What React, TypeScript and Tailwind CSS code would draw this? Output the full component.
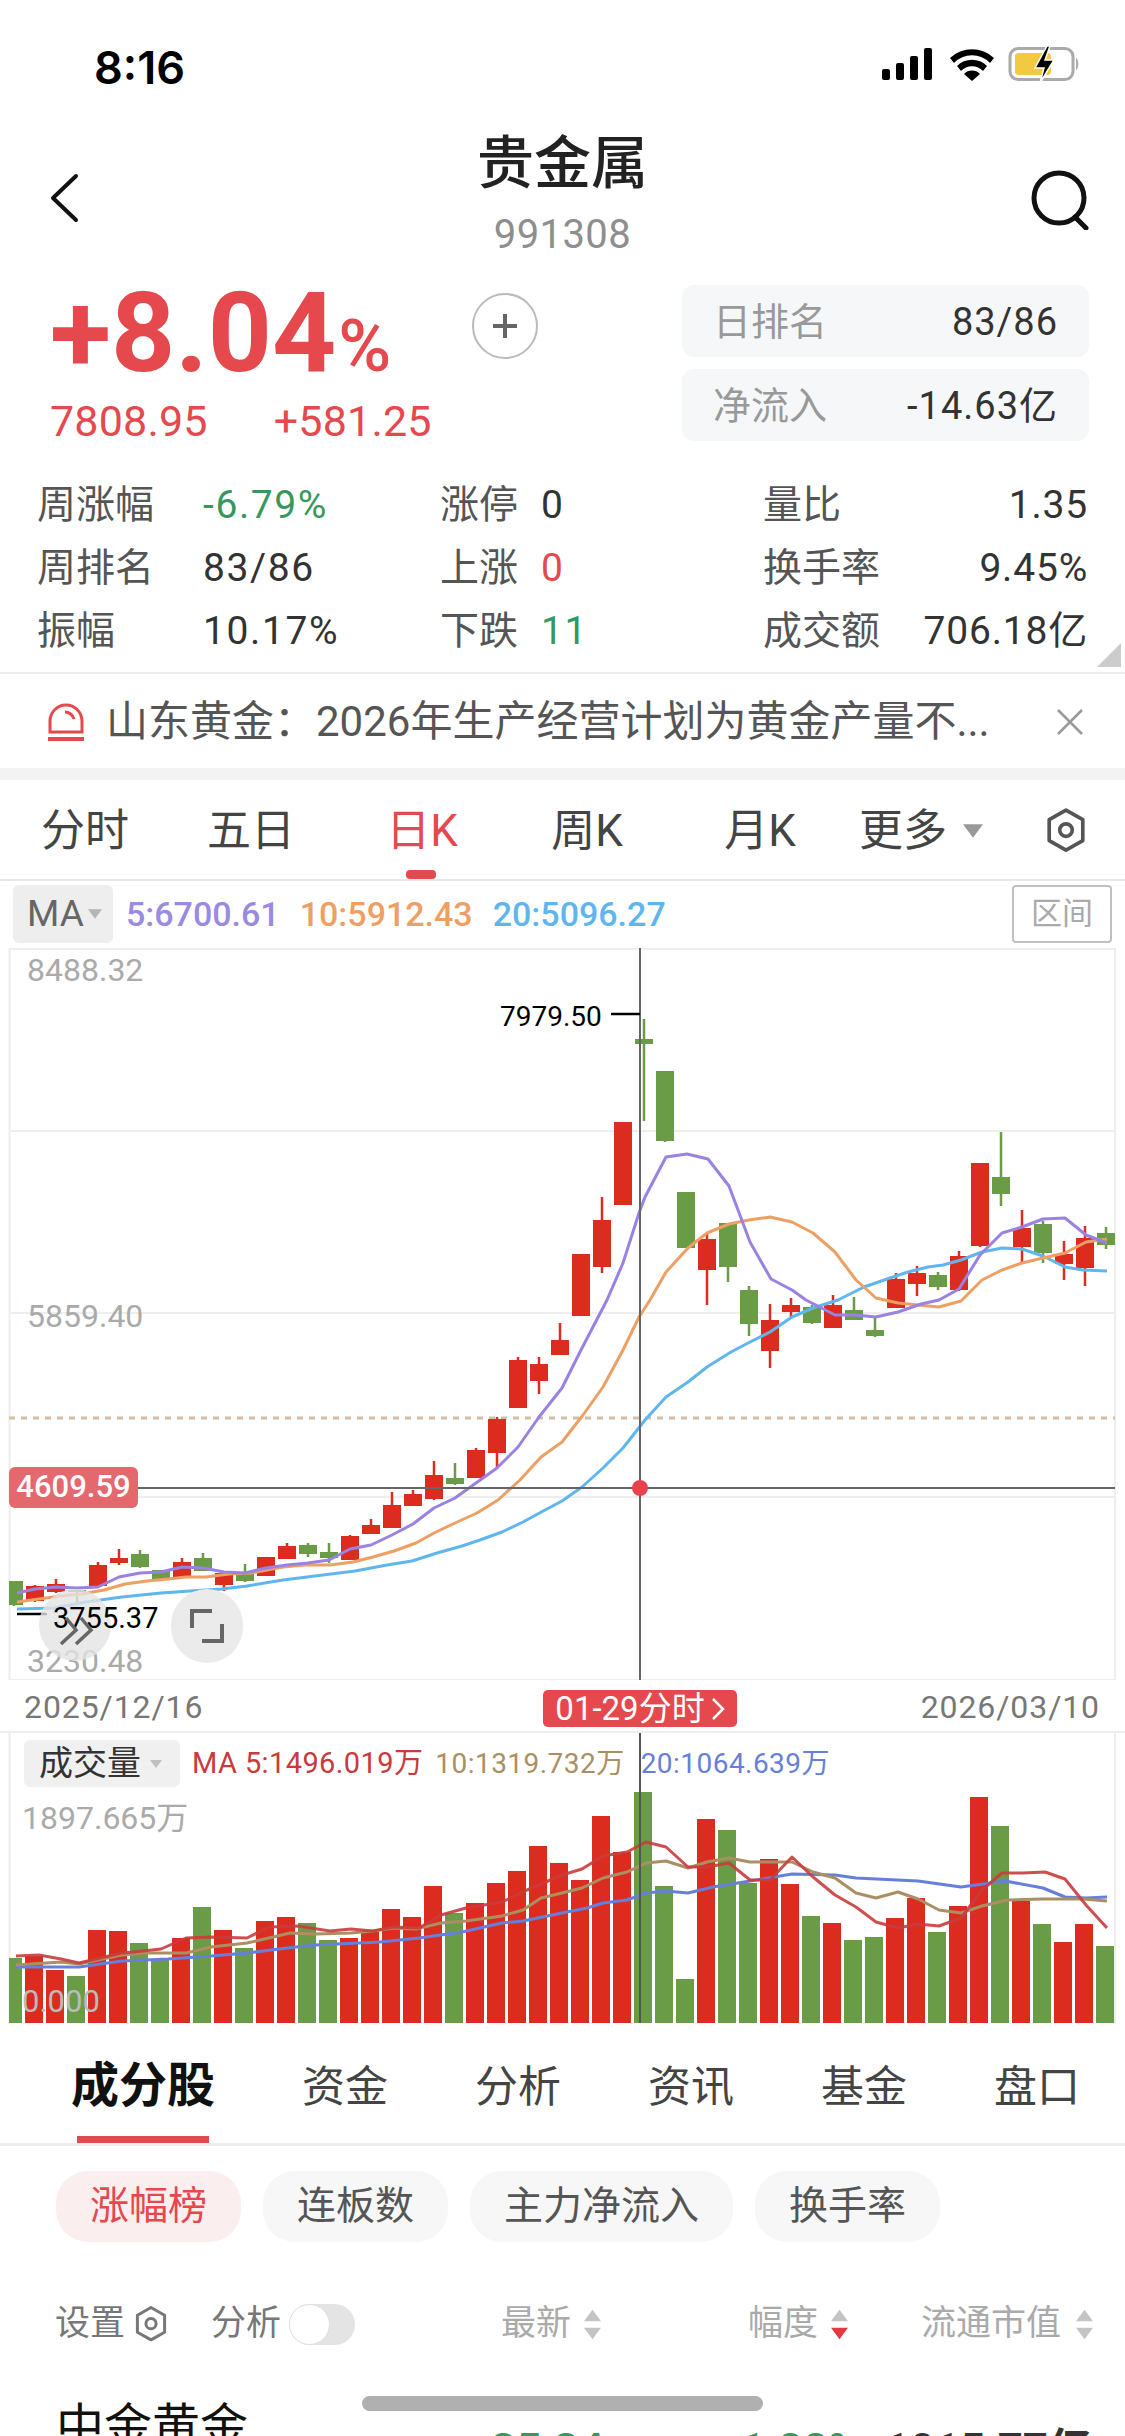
import React from "react";

const RED = "#db2c1f";
const GREEN = "#6a9c48";

// Candles: [rising, bodyTop, bodyBottom, wickTop, wickBottom]
const candles: [boolean, number, number, number, number][] = [
  [false, 1581, 1605, 1581, 1606],
  [true, 1586, 1601, 1585, 1602],
  [true, 1584, 1592, 1579, 1593],
  [false, 1590, 1592, 1590, 1602],
  [true, 1565, 1586, 1562, 1587],
  [true, 1558, 1563, 1549, 1565],
  [false, 1554, 1567, 1550, 1568],
  [false, 1570, 1580, 1570, 1581],
  [true, 1562, 1577, 1558, 1577],
  [false, 1558, 1571, 1553, 1571],
  [true, 1573, 1585, 1572, 1591],
  [false, 1574, 1581, 1564, 1582],
  [true, 1557, 1576, 1557, 1576],
  [true, 1546, 1559, 1543, 1559],
  [false, 1545, 1554, 1543, 1557],
  [false, 1552, 1558, 1543, 1563],
  [true, 1536, 1560, 1535, 1560],
  [true, 1525, 1534, 1519, 1534],
  [true, 1505, 1528, 1492, 1528],
  [true, 1494, 1506, 1490, 1506],
  [true, 1475, 1499, 1461, 1500],
  [false, 1478, 1484, 1463, 1485],
  [true, 1450, 1478, 1448, 1478],
  [true, 1419, 1453, 1417, 1468],
  [true, 1360, 1408, 1357, 1408],
  [true, 1364, 1381, 1357, 1394],
  [true, 1340, 1355, 1323, 1355],
  [true, 1254, 1316, 1254, 1316],
  [true, 1220, 1267, 1197, 1273],
  [true, 1122, 1205, 1122, 1205],
  [false, 1039, 1044, 1019, 1121],
  [false, 1071, 1141, 1071, 1142],
  [false, 1192, 1248, 1192, 1248],
  [true, 1239, 1270, 1233, 1305],
  [false, 1223, 1267, 1223, 1282],
  [false, 1290, 1324, 1286, 1336],
  [true, 1320, 1351, 1304, 1368],
  [true, 1305, 1312, 1298, 1317],
  [false, 1307, 1323, 1305, 1324],
  [true, 1305, 1328, 1295, 1328],
  [false, 1310, 1320, 1297, 1320],
  [false, 1330, 1336, 1318, 1337],
  [true, 1279, 1308, 1273, 1308],
  [true, 1273, 1284, 1266, 1296],
  [false, 1275, 1287, 1272, 1290],
  [true, 1256, 1290, 1251, 1291],
  [true, 1163, 1246, 1163, 1247],
  [false, 1177, 1194, 1132, 1206],
  [true, 1228, 1247, 1210, 1264],
  [false, 1224, 1253, 1221, 1263],
  [true, 1254, 1264, 1241, 1280],
  [true, 1238, 1268, 1226, 1286],
  [false, 1233, 1245, 1227, 1249],
];

const ma5 = "17,1593 35,1589 56,1587 77,1588 98,1587 119,1577 140,1573 161,1572 182,1567 203,1568 224,1572 245,1573 266,1568 287,1565 308,1563 329,1560 350,1549 371,1545 392,1535 413,1524 434,1508 455,1498 476,1483 497,1468 518,1447 539,1417 562,1388 581,1350 607,1300 623,1263 639,1213 645,1197 666,1157 687,1154 708,1159 729,1186 750,1242 771,1279 792,1290 806,1300 835,1315 855,1315 876,1317 898,1312 921,1304 939,1300 959,1289 980,1255 1002,1233 1022,1227 1043,1219 1065,1218 1086,1235 1107,1243";
const ma10 = "17,1602 61,1596 82,1594 104,1590 125,1584 147,1581 168,1579 186,1577 206,1577 229,1574 251,1573 283,1567 305,1565 330,1565 353,1562 373,1557 394,1551 416,1543 434,1533 455,1523 477,1513 498,1500 520,1480 541,1457 562,1442 583,1415 603,1387 623,1350 639,1317 650,1300 666,1272 688,1248 707,1233 729,1224 749,1220 770,1217 792,1222 813,1233 835,1252 856,1280 876,1298 898,1303 918,1305 939,1307 961,1301 982,1280 1002,1270 1022,1263 1043,1258 1065,1253 1086,1242 1107,1239";
const ma20 = "17,1609 54,1608 86,1602 122,1597 161,1593 190,1591 222,1589 247,1586 283,1580 323,1575 355,1571 387,1565 412,1561 437,1553 462,1546 480,1540 502,1532 523,1522 545,1510 562,1501 582,1487 603,1468 623,1448 645,1420 666,1397 688,1382 707,1367 731,1352 750,1342 770,1332 792,1317 813,1308 838,1300 864,1287 887,1279 908,1272 928,1267 943,1265 961,1260 982,1252 1002,1248 1022,1249 1043,1256 1065,1267 1083,1270 1107,1271";

// Top edge of each volume bar; all of them stand on the chart's base line.
const volumes = [1958, 1956, 1970, 1976, 1930, 1931, 1943, 1960, 1938, 1907, 1930, 1948, 1921, 1917, 1923, 1940, 1938, 1932, 1909, 1917, 1886, 1913, 1903, 1883, 1871, 1846, 1863, 1880, 1816, 1852, 1792, 1886, 1979, 1819, 1830, 1883, 1859, 1884, 1916, 1923, 1940, 1937, 1918, 1898, 1932, 1906, 1797, 1826, 1901, 1924, 1942, 1924, 1946];

const volRed = "16,1956 39,1955 61,1959 79,1963 100,1958 122,1953 143,1951 161,1949 186,1938 211,1937 247,1938 269,1927 298,1926 330,1931 351,1929 373,1931 394,1927 419,1928 441,1915 466,1908 502,1902 527,1890 562,1875 582,1869 603,1856 627,1852 646,1842 666,1847 688,1867 707,1867 729,1863 750,1880 770,1880 792,1857 813,1877 835,1895 856,1907 876,1922 898,1928 918,1924 939,1926 961,1918 982,1890 1002,1873 1023,1873 1045,1872 1065,1879 1086,1905 1107,1928";
const volTan = "16,1965 61,1962 79,1964 122,1955 143,1953 186,1953 211,1947 247,1943 269,1938 290,1933 315,1934 351,1933 373,1931 394,1928 416,1929 441,1923 466,1921 502,1916 523,1910 541,1898 562,1893 582,1888 603,1878 627,1872 646,1863 666,1861 688,1868 707,1862 729,1858 750,1862 792,1862 813,1872 835,1878 856,1893 876,1898 898,1892 918,1899 939,1910 961,1913 982,1906 1007,1900 1043,1899 1083,1899 1107,1901";
const volBlue = "16,1967 79,1967 122,1961 168,1959 211,1956 247,1953 287,1948 315,1945 380,1942 419,1938 462,1932 502,1923 523,1921 562,1913 587,1908 603,1903 627,1900 646,1893 666,1891 688,1893 713,1887 750,1881 792,1874 835,1875 856,1878 918,1881 961,1887 1005,1881 1043,1888 1065,1897 1086,1898 1107,1897";

const centerX = (i: number) => 14 + 21 * i;

function StatusIcons() {
  return (
    <svg width="200" height="40" viewBox="880 50 200 40" className="block">
      <rect x="882" y="74" width="8" height="11" rx="2" fill="#000" />
      <rect x="896" y="68" width="8" height="17" rx="2" fill="#000" />
      <rect x="910" y="61" width="8" height="24" rx="2" fill="#000" />
      <rect x="924" y="53" width="8" height="32" rx="2" fill="#000" />
      <path d="M950 63a32 32 0 0 1 44 0l-4 5a25 25 0 0 0-36 0z" fill="#000" />
      <path d="M957 71a21 21 0 0 1 30 0l-4 5a15 15 0 0 0-22 0z" fill="#000" />
      <path d="M964 79a11 11 0 0 1 16 0l-8 7z" fill="#000" />
      <rect x="1010" y="53.5" width="63" height="31" rx="8" fill="none" stroke="#aaa" strokeWidth="3" />
      <rect x="1015" y="58" width="36" height="22" rx="4" fill="#f3c941" />
      <path d="M1076 63c3 1 3 11 0 12z" fill="#aaa" />
      <path d="M1047 51l-12 22h9l-4 15 14-23h-9l5-14z" fill="#000" stroke="#fff" strokeWidth="1.5" />
    </svg>
  );
}

function HexIcon({ size, color }: { size: number; color: string }) {
  return (
    <svg width={size} height={size * 1.1} viewBox="0 0 40 44" fill="none" stroke={color} strokeWidth="3.5" strokeLinejoin="round">
      <path d="M20 3l16 9v20l-16 9-16-9V12z" />
      <circle cx="20" cy="22" r="6" />
    </svg>
  );
}

function Triangle({ color, up = false, w = 18, h = 12 }: { color: string; up?: boolean; w?: number; h?: number }) {
  return (
    <svg width={w} height={h} viewBox="0 0 18 12" className="block">
      <path d={up ? "M9 0l9 12H0z" : "M0 0h18L9 12z"} fill={color} />
    </svg>
  );
}

function SortArrows({ active = false }: { active?: boolean }) {
  return (
    <span className="flex flex-col gap-[5px]">
      <Triangle color="#c4c4c4" up w={17} h={13} />
      <Triangle color={active ? "#e5393f" : "#c4c4c4"} w={17} h={13} />
    </span>
  );
}

function StatRow({ label, value, cls, labelW }: { label: string; value: string; cls: string; labelW: string }) {
  return (
    <div className="flex h-[63px] items-center">
      <span className={`${labelW} text-[#555]`}>{label}</span>
      <span className={`tracking-[1.6px] ${cls}`}>{value}</span>
    </div>
  );
}

function SummaryCard({ label, value }: { label: string; value: string }) {
  return (
    <div className="flex h-[72px] w-[407px] items-center justify-between rounded-[12px] bg-[#f6f7f9] pl-[31px] pr-[31px] pt-[2px]">
      <span className="text-[38px] text-[#999]">{label}</span>
      <span className="text-[38px] tracking-[1px] text-[#333]">{value}</span>
    </div>
  );
}

function PriceChart() {
  return (
    <div className="relative h-[732px] w-full">
      <svg width="1125" height="732" viewBox="0 948 1125 732" className="block">
        <rect x="9.5" y="949" width="1105.5" height="731" fill="none" stroke="#eeeeee" strokeWidth="2" />
        <line x1="9" x2="1115" y1="1131" y2="1131" stroke="#eeeeee" strokeWidth="2" />
        <line x1="9" x2="1115" y1="1313" y2="1313" stroke="#eeeeee" strokeWidth="2" />
        <line x1="9" x2="1115" y1="1497" y2="1497" stroke="#eeeeee" strokeWidth="2" />
        <line x1="9" x2="1115" y1="1418" y2="1418" stroke="#d2bfa6" strokeWidth="3" strokeDasharray="6 6" />
        {candles.map(([up, top, bottom, wickTop, wickBottom], i) => {
          const c = up ? RED : GREEN;
          const cx = centerX(i);
          const left = Math.max(cx - 9, 9);
          return (
            <g key={i}>
              <rect x={cx - 1.25} y={wickTop} width="2.5" height={wickBottom - wickTop} fill={c} />
              <rect x={left} y={top} width={cx + 9 - left} height={bottom - top} fill={c} />
            </g>
          );
        })}
        <polyline points={ma20} fill="none" stroke="#5fb6ef" strokeWidth="3" strokeLinejoin="round" />
        <polyline points={ma10} fill="none" stroke="#ee9f63" strokeWidth="3" strokeLinejoin="round" />
        <polyline points={ma5} fill="none" stroke="#9a82e2" strokeWidth="3" strokeLinejoin="round" />
        <line x1="640" x2="640" y1="948" y2="1680" stroke="#666" strokeWidth="2" />
        <line x1="9" x2="1115" y1="1488" y2="1488" stroke="#666" strokeWidth="2" />
        <circle cx="640" cy="1488" r="8" fill="#e8434c" />
        <line x1="611" x2="640" y1="1014" y2="1014" stroke="#000" strokeWidth="2.5" />
        <line x1="17" x2="47" y1="1614" y2="1614" stroke="#000" strokeWidth="2.5" />
      </svg>

      <span className="absolute left-[27px] top-[6px] text-[32px] leading-[32px] text-[#aaa]">8488.32</span>
      <span className="absolute left-[27px] top-[352px] text-[32px] leading-[32px] text-[#aaa]">5859.40</span>
      <span className="absolute left-[27px] top-[697px] text-[32px] leading-[32px] text-[#aaa]">3230.48</span>
      <span className="absolute left-[500px] top-[53px] text-[28px] leading-[32px] text-black">7979.50</span>

      <span className="absolute left-[39px] top-[641px] h-[72px] w-[72px] rounded-full bg-[#e4e4e4] opacity-80" />
      <span className="absolute left-[171px] top-[641px] flex h-[74px] w-[72px] items-center justify-center rounded-full bg-[#ebebeb]">
        <svg width="36" height="36" viewBox="0 0 36 36" fill="none" stroke="#666" strokeWidth="4">
          <path d="M3 20V3h20" />
          <path d="M33 16v17H13" />
        </svg>
      </span>
      <span className="absolute left-[53px] top-[654px] text-[29px] leading-[32px] text-black">3755.37</span>
      <svg width="36" height="30" viewBox="0 0 36 30" className="absolute left-[59px] top-[668px]" fill="none" stroke="#666" strokeWidth="3.5">
        <path d="M2 28l15-14L7 2" />
        <path d="M17 28l15-14L22 2" />
      </svg>

      <span className="absolute left-[9px] top-[519px] flex h-[41px] w-[129px] items-center justify-center rounded-[6px] bg-[#e4696f] text-[31px] font-medium text-white">
        4609.59
      </span>
    </div>
  );
}

function VolumeChart() {
  return (
    <div className="relative h-[290px] w-full">
      <svg width="1125" height="290" viewBox="0 1733 1125 290" className="block">
        <line x1="9.5" x2="9.5" y1="1733" y2="2023" stroke="#eeeeee" strokeWidth="2" />
        <line x1="1115" x2="1115" y1="1733" y2="2023" stroke="#eeeeee" strokeWidth="2" />
        {volumes.map((top, i) => {
          const cx = centerX(i) - 1;
          const left = Math.max(cx - 9, 9);
          return <rect key={i} x={left} y={top} width={cx + 9 - left} height={2023 - top} fill={candles[i][0] ? RED : GREEN} />;
        })}
        <polyline points={volBlue} fill="none" stroke="#667fdb" strokeWidth="3" strokeLinejoin="round" />
        <polyline points={volTan} fill="none" stroke="#ab8f62" strokeWidth="3" strokeLinejoin="round" />
        <polyline points={volRed} fill="none" stroke="#c93c3c" strokeWidth="3" strokeLinejoin="round" opacity="0.9" />
        <line x1="640" x2="640" y1="1733" y2="2024" stroke="#555" strokeWidth="2" />
      </svg>

      <div className="absolute left-[24px] top-[7px] flex items-center">
        <span className="flex h-[47px] w-[156px] items-center gap-[8px] rounded-[6px] bg-[#f0f0f0] pl-[15px] text-[34px] text-[#333]">
          成交量
          <Triangle color="#c0c0c0" w={14} h={8} />
        </span>
        <span className="ml-[12px] text-[29px] tracking-[0.4px] text-[#c83a3c]">MA 5:1496.019万</span>
        <span className="ml-[12px] text-[28px] tracking-[0.46px] text-[#ab8f62]">10:1319.732万</span>
        <span className="ml-[16px] text-[28px] tracking-[0.46px] text-[#667fdb]">20:1064.639万</span>
      </div>
      <span className="absolute left-[22px] top-[69px] text-[32px] leading-[32px] text-[#aaa]">1897.665万</span>
      <span className="absolute left-[22px] top-[253px] text-[31px] leading-[32px] text-[#bbb]">0.000</span>
    </div>
  );
}

export default function App() {
  return (
    <div className="relative h-[2436px] w-[1125px] overflow-hidden bg-white font-['Roboto','Noto_Sans_CJK_SC',sans-serif]">
      {/* Status bar */}
      <div className="flex h-[120px] items-start justify-between pl-[94px] pr-[45px] pt-[45px]">
        <span className="font-['Inter',sans-serif] text-[45px] font-semibold leading-[46px] text-black">8:16</span>
        <StatusIcons />
      </div>

      {/* Navigation */}
      <div className="grid h-[150px] grid-cols-[1fr_auto_1fr]">
        <div className="pl-[48px] pt-[53px]">
          <svg width="32" height="50" viewBox="0 0 32 50" fill="none" stroke="#111" strokeWidth="4" strokeLinecap="round" strokeLinejoin="round">
            <path d="M28 3L5 25l23 22" />
          </svg>
        </div>
        <div className="flex flex-col items-center pt-[16px]">
          <span className="text-[57px] font-medium leading-[56px] text-[#222]">贵金属</span>
          <span className="mt-[23px] text-[40px] leading-[40px] tracking-[0.4px] text-[#8e8e8e]">991308</span>
        </div>
        <div className="flex justify-end pr-[35px] pt-[50px]">
          <svg width="60" height="60" viewBox="0 0 60 60" fill="none" stroke="#111" strokeWidth="5" strokeLinecap="round">
            <circle cx="29" cy="28" r="25" />
            <path d="M45 47l11 11" />
          </svg>
        </div>
      </div>

      {/* Change, rank and inflow */}
      <div className="flex h-[200px]">
        <div className="w-[472px] pl-[50px]">
          <div className="mt-[7px] flex h-[112px] items-baseline text-[#e5484d]">
            <span className="text-[112px] font-bold leading-[112px]">+8.04</span>
            <span className="ml-[2px] text-[72px] font-medium leading-[72px]">%</span>
          </div>
          <div className="mt-[10px] flex gap-[66px] text-[43px] leading-[44px] tracking-[0.2px] text-[#e5484d]">
            <span>7808.95</span>
            <span>+581.25</span>
          </div>
        </div>
        <div className="mt-[23px] flex h-[66px] w-[66px] items-center justify-center rounded-full border-2 border-[#bbb] text-[#666]">
          <svg width="28" height="28" viewBox="0 0 28 28" stroke="#666" strokeWidth="4">
            <path d="M14 2v24M2 14h24" />
          </svg>
        </div>
        <div className="ml-auto mr-[36px] mt-[15px] flex flex-col gap-[12px]">
          <SummaryCard label="日排名" value="83/86" />
          <SummaryCard label="净流入" value="-14.63亿" />
        </div>
      </div>

      {/* Breadth and turnover statistics */}
      <div className="relative flex h-[202px] pl-[37px] pt-[3px] text-[39px] leading-[40px]">
        <div className="w-[403px]">
          <StatRow label="周涨幅" value="-6.79%" labelW="w-[166px]" cls="text-[#36985c]" />
          <StatRow label="周排名" value="83/86" labelW="w-[166px]" cls="text-[#333]" />
          <StatRow label="振幅" value="10.17%" labelW="w-[166px]" cls="text-[#333]" />
        </div>
        <div className="w-[323px]">
          <StatRow label="涨停" value="0" labelW="w-[101px]" cls="text-[#333]" />
          <StatRow label="上涨" value="0" labelW="w-[101px]" cls="text-[#e5484d]" />
          <StatRow label="下跌" value="11" labelW="w-[101px]" cls="text-[#36985c]" />
        </div>
        <div className="w-[325px]">
          <div className="flex h-[63px] items-center justify-between">
            <span className="text-[#555]">量比</span>
            <span className="tracking-[0.8px] text-[#333]">1.35</span>
          </div>
          <div className="flex h-[63px] items-center justify-between">
            <span className="text-[#555]">换手率</span>
            <span className="tracking-[0.8px] text-[#333]">9.45%</span>
          </div>
          <div className="flex h-[63px] items-center justify-between">
            <span className="text-[#555]">成交额</span>
            <span className="tracking-[0.8px] text-[#333]">706.18亿</span>
          </div>
        </div>
        <svg width="24" height="24" viewBox="0 0 24 24" className="absolute right-[4px] top-[173px]">
          <path d="M24 0v24H0z" fill="#ccc" />
        </svg>
      </div>

      {/* News ticker */}
      <div className="flex h-[96px] items-center border-t-2 border-[#eeeeee] pl-[48px] pt-[2px]">
        <svg width="36" height="38" viewBox="0 0 36 38" fill="none" stroke="#e5484d" strokeWidth="3">
          <path d="M2 29V18a16 16 0 0 1 32 0v11z" />
          <path d="M17 9c4 0 8 3 9 7" />
          <path d="M0 36h36" strokeWidth="4" />
        </svg>
        <span className="ml-[22px] w-[892px] whitespace-nowrap text-[42px] leading-[48px] text-[#555]">山东黄金：2026年生产经营计划为黄金产量不...</span>
        <svg width="30" height="30" viewBox="0 0 30 30" className="ml-[57px]" stroke="#999" strokeWidth="2.5">
          <path d="M3 3l24 24M27 3L3 27" />
        </svg>
      </div>
      <div className="h-[12px] bg-[#f3f3f3]" />

      {/* Period tabs */}
      <div className="flex h-[101px] items-stretch border-b-2 border-[#e8e8e8] pt-[2px] text-[44px] text-[#444]">
        <div className="flex w-[170px] items-center justify-center">分时</div>
        <div className="flex w-[162px] items-center justify-center">五日</div>
        <div className="relative flex w-[180px] items-center justify-center text-[#e5484d]">
          日K
          <span className="absolute bottom-0 left-[74px] h-[9px] w-[30px] rounded-[4px] bg-[#e5484d]" />
        </div>
        <div className="flex w-[150px] items-center justify-center">周K</div>
        <div className="flex w-[196px] items-center justify-center">月K</div>
        <div className="flex items-center gap-[16px] pl-[1px]">
          更多
          <Triangle color="#999" w={20} h={14} />
        </div>
        <div className="ml-[62px] flex items-center">
          <HexIcon size={42} color="#555" />
        </div>
      </div>

      {/* Moving-average legend */}
      <div className="flex h-[67px] items-start pl-[13px] pt-[4px]">
        <span className="flex h-[58px] w-[100px] items-center gap-[4px] rounded-[6px] bg-[#eeeeee] pl-[14px] text-[37px] text-[#666]">
          MA
          <Triangle color="#b5b5b5" w={14} h={10} />
        </span>
        <div className="ml-[13px] flex h-[58px] items-center gap-[20px] text-[34px] font-medium">
          <span className="text-[#9a8ae2]">5:6700.61</span>
          <span className="text-[#ee9f63]">10:5912.43</span>
          <span className="text-[#5fb6ef]">20:5096.27</span>
        </div>
        <span className="ml-auto mr-[13px] flex h-[58px] w-[100px] items-center justify-center rounded-[4px] border-2 border-[#c0c0c0] text-[31px] text-[#aaa]">
          区间
        </span>
      </div>

      <PriceChart />

      {/* Date axis */}
      <div className="relative flex h-[53px] items-center justify-between border-b-2 border-[#eeeeee] pl-[24px] pr-[25px] pt-[3px] text-[32px] tracking-[0.9px] text-[#777]">
        <span>2025/12/16</span>
        <span>2026/03/10</span>
        <span className="absolute left-[543px] top-[10px] flex h-[37px] w-[194px] items-center justify-center gap-[6px] rounded-[5px] bg-[#e5484d] text-[33px] leading-[37px] tracking-normal text-white">
          01-29分时
          <svg width="14" height="24" viewBox="0 0 14 24" fill="none" stroke="#fff" strokeWidth="2.5">
            <path d="M2 2l10 10L2 22" />
          </svg>
        </span>
      </div>

      <VolumeChart />

      {/* Detail tabs */}
      <div className="flex h-[123px] gap-[87px] border-b-[3px] border-[#eeeeee] pl-[71px]">
        <div className="flex flex-col items-center pt-[39px]">
          <span className="text-[48px] font-bold leading-[48px] text-[#111]">成分股</span>
          <span className="mt-auto h-[7px] w-[132px] bg-[#e5484d]" />
        </div>
        {["资金", "分析", "资讯", "基金", "盘口"].map((t) => (
          <span key={t} className="pt-[43px] text-[43px] leading-[43px] text-[#444]">
            {t}
          </span>
        ))}
      </div>

      {/* Ranking filters */}
      <div className="flex gap-[22px] pl-[56px] pt-[25px] text-[39px] text-[#555]">
        <span className="flex h-[71px] w-[185px] items-center justify-center rounded-[32px] bg-[#fbeeef] text-[#e5484d]">涨幅榜</span>
        <span className="flex h-[71px] w-[185px] items-center justify-center rounded-[32px] bg-[#f7f7f7]">连板数</span>
        <span className="flex h-[71px] w-[263px] items-center justify-center rounded-[32px] bg-[#f7f7f7]">主力净流入</span>
        <span className="flex h-[71px] w-[185px] items-center justify-center rounded-[32px] bg-[#f7f7f7]">换手率</span>
      </div>

      {/* Table header */}
      <div className="mt-[52px] flex h-[60px] items-center pl-[55px] text-[35px] text-[#aaa]">
        <span className="w-[70px] text-[#777]">设置</span>
        <span className="ml-[9px]">
          <HexIcon size={34} color="#777" />
        </span>
        <span className="ml-[43px] w-[70px] text-[#777]">分析</span>
        <span className="relative ml-[8px] h-[41px] w-[66px] rounded-full bg-[#e4e4e4]">
          <span className="absolute left-0 top-0 h-[41px] w-[41px] rounded-full border border-[#e0e0e0] bg-white" />
        </span>
        <span className="ml-[146px] w-[70px]">最新</span>
        <span className="ml-[13px]">
          <SortArrows />
        </span>
        <span className="ml-[147px] w-[70px]">幅度</span>
        <span className="ml-[13px]">
          <SortArrows active />
        </span>
        <span className="ml-[73px] w-[140px]">流通市值</span>
        <span className="ml-[15px]">
          <SortArrows />
        </span>
      </div>

      {/* First constituent row, cut off by the screen edge */}
      <div className="mt-[49px] flex items-start pl-[56px]">
        <span className="text-[48px] leading-[48px] text-[#111]">中金黄金</span>
        <span className="ml-[243px] mt-[23px] text-[44px] font-semibold leading-[48px] text-[#36985c]">35.34</span>
        <span className="ml-[120px] mt-[23px] text-[44px] font-semibold leading-[48px] text-[#36985c]">-1.88%</span>
        <span className="ml-[24px] mt-[23px] text-[44px] font-semibold leading-[48px] text-[#333]">1015.77亿</span>
      </div>

      {/* Home indicator */}
      <span className="absolute left-[362px] top-[2396px] h-[15px] w-[401px] rounded-full bg-[#b0b0b0]" />
    </div>
  );
}
